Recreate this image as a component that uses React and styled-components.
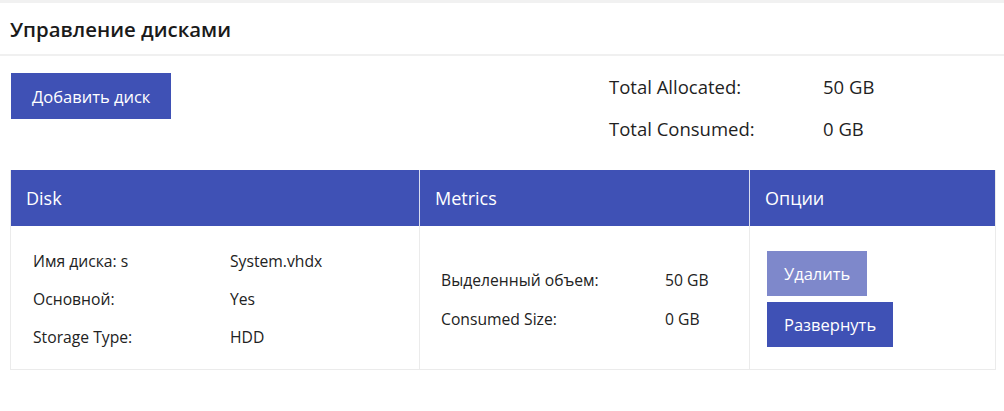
import React from "react"
import styled, {createGlobalStyle} from "styled-components"

const GlobalStyle = createGlobalStyle`
  body {
    margin: 0;
    background: white;
    font-family: "Open Sans", "Noto Sans", sans-serif;
    color: #222;
  }
`;

const Page = styled.div`
  display: flex;
  flex-direction: column;
  width: 1004px;
  border-top: 3px solid #f1f1f1;
`;

const Header = styled.div`
  display: flex;
  align-items: center;
  height: 51px;
  padding: 0 10px;
  border-bottom: 2px solid #f0f0f0;
`;

const Title = styled.h1`
  margin: 0;
  font-size: 20.4px;
  font-weight: 600;
  color: #1a1a1a;
`;

const Toolbar = styled.div`
  display: flex;
  justify-content: space-between;
  align-items: flex-start;
  padding: 17px 10px 0 11px;
  height: 114px;
  box-sizing: border-box;
`;

const Button = styled.button`
  border: none;
  border-radius: 0;
  padding: 0 ${props => props.pad || 18}px;
  height: ${props => props.h || 45}px;
  background: ${props => props.muted ? "#7e88cb" : "#3f51b5"};
  color: white;
  font-family: inherit;
  font-size: 16.5px;
  font-weight: 500;
  cursor: pointer;
`;

const Totals = styled.div`
  display: grid;
  grid-template-columns: 214px 171px;
  row-gap: 16px;
  margin-top: 1px;
  font-size: 18.5px;
  color: #1f1f1f;
  line-height: 26px;
`;

const Table = styled.div`
  display: grid;
  grid-template-columns: 408px 330px 246px;
  margin: 0 10px 0 10px;
  width: 984px;
  border: 1px solid #ebebeb;
  border-top: none;
`;

const HeadCell = styled.div`
  display: flex;
  align-items: center;
  height: 56px;
  padding-left: 15px;
  background: #3f51b5;
  color: white;
  font-size: 18px;
  border-left: ${props => props.first ? "none" : "1px solid #d8dcf0"};
`;

const BodyCell = styled.div`
  display: flex;
  flex-direction: column;
  height: 143px;
  box-sizing: border-box;
  padding: ${props => props.pad};
  border-left: ${props => props.first ? "none" : "1px solid #ebebeb"};
`;

const InfoGrid = styled.div`
  display: grid;
  grid-template-columns: ${props => props.cols};
  row-gap: ${props => props.gap}px;
  font-size: 15.7px;
  line-height: 21px;
  color: #222;
`;

const Actions = styled.div`
  display: flex;
  flex-direction: column;
  align-items: flex-start;
  gap: 6px;
`;

const App = () => {
  return (
    <>
      <GlobalStyle/>
      <Page>
        <Header>
          <Title>Управление дисками</Title>
        </Header>
        <Toolbar>
          <Button h={46} pad={21}>Добавить диск</Button>
          <Totals>
            <span>Total Allocated:</span>
            <span>50 GB</span>
            <span>Total Consumed:</span>
            <span>0 GB</span>
          </Totals>
        </Toolbar>
        <Table>
          <HeadCell first>Disk</HeadCell>
          <HeadCell>Metrics</HeadCell>
          <HeadCell>Опции</HeadCell>
          <BodyCell first pad="25px 0 0 22px">
            <InfoGrid cols="197px auto" gap={17}>
              <span>Имя диска: s</span>
              <span>System.vhdx</span>
              <span>Основной:</span>
              <span>Yes</span>
              <span>Storage Type:</span>
              <span>HDD</span>
            </InfoGrid>
          </BodyCell>
          <BodyCell pad="44px 0 0 21px">
            <InfoGrid cols="224px auto" gap={18}>
              <span>Выделенный объем:</span>
              <span>50 GB</span>
              <span>Consumed Size:</span>
              <span>0 GB</span>
            </InfoGrid>
          </BodyCell>
          <BodyCell pad="25px 0 0 17px">
            <Actions>
              <Button muted h={45} pad={17}>Удалить</Button>
              <Button h={45} pad={17}>Развернуть</Button>
            </Actions>
          </BodyCell>
        </Table>
      </Page>
    </>
  );
}

export default App;
